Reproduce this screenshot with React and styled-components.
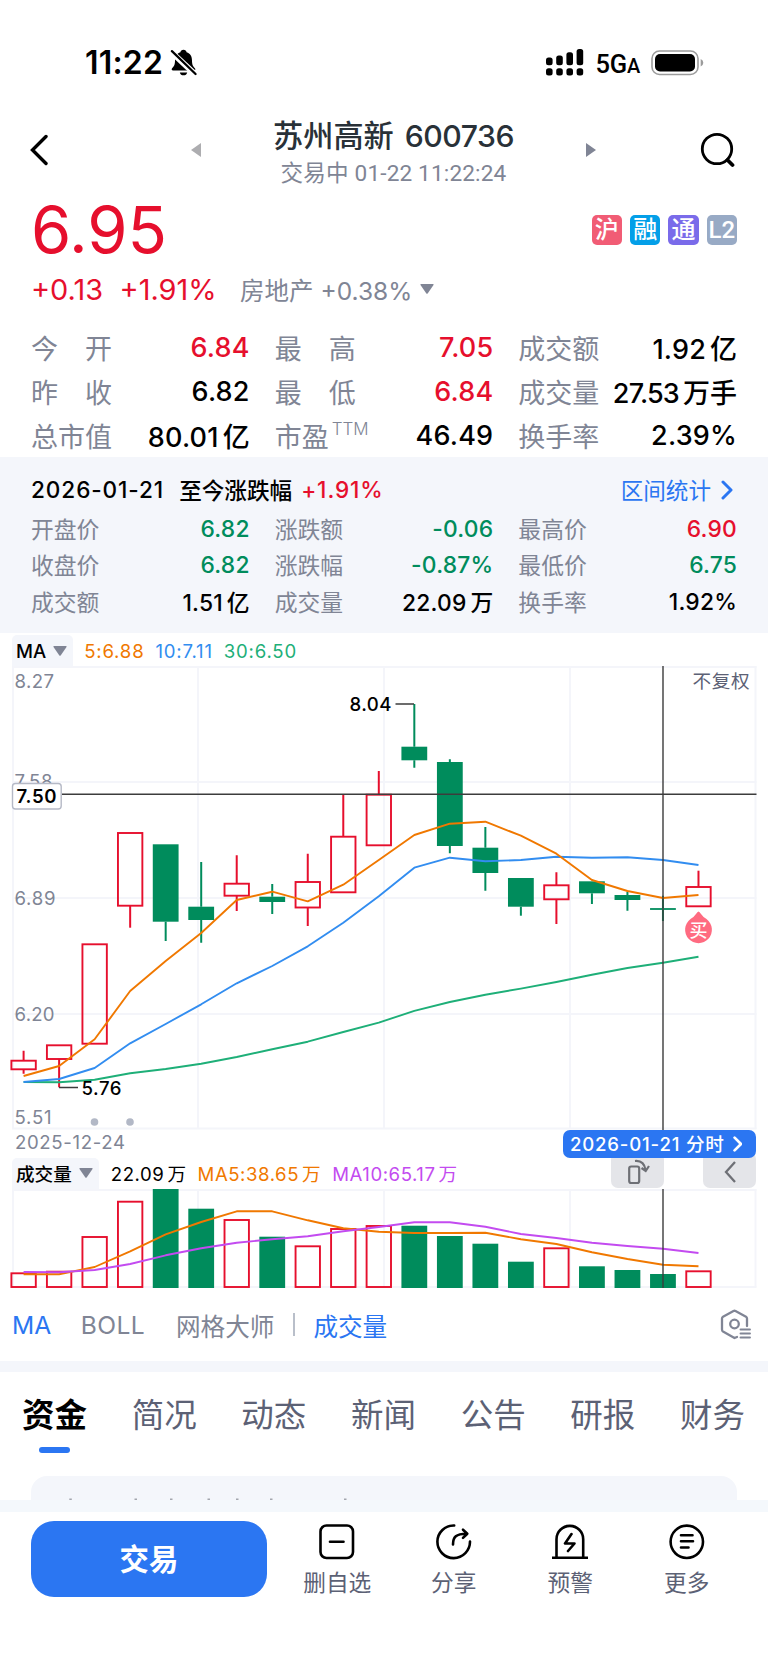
import React, { Component } from 'react';
import styled, { css, createGlobalStyle } from 'styled-components';

const RED = '#e60f2d';
const GREEN = '#008c5c';
const BLUE = '#2b76f2';
const ORANGE = '#f07800';
const GRAY = '#808595';
const SLATE = '#5c6175';
const GRID = '#f4f5fa';
const PANEL = '#f4f6fb';

const FONT = '"Inter", "Noto Sans CJK SC", sans-serif';

// step between candles and the center of the first one
const STEP = 35.52;
const FIRST = 23.6;
const cx = (i) => FIRST + STEP * i;

// [up?, high, body top, body bottom, low], y measured on the chart
const CANDLES = [
	[1, 1050.7, 1060.7, 1069.3, 1073.7],
	[1, 1045.3, 1045.3, 1059, 1087.3],
	[1, 944.3, 944.3, 1043.7, 1043.7],
	[1, 833, 833, 905.7, 927.7],
	[0, 844.3, 844.3, 921.7, 941],
	[0, 862, 906.7, 920, 942.7],
	[1, 855.3, 883.7, 895.7, 911],
	[0, 884, 896.7, 902, 914],
	[1, 853.7, 882, 907.5, 926],
	[1, 794.3, 836.7, 892.3, 892.3],
	[1, 771, 794.7, 845.3, 845.3],
	[0, 704, 746.7, 760.3, 767.7],
	[0, 759.3, 762, 846, 853.3],
	[0, 827, 847.7, 873, 890.7],
	[0, 878, 878, 906.7, 915.7],
	[1, 872.3, 885.3, 899.3, 924],
	[0, 881.3, 881.3, 893.3, 904],
	[0, 891.7, 895, 900, 910.7],
	[0, 895.7, 908.1, 909.9, 921],
	[1, 870.7, 887, 906.3, 906.3],
];
const MA5 = [1076, 1066, 1039.3, 991, 961, 933, 900, 891.7, 901.3, 884.7, 860, 835, 823.7, 821.7, 835.7, 853.7, 880, 891, 898, 895];
const MA10 = [1082, 1079, 1068, 1043.3, 1024, 1004.3, 983.3, 966, 946.3, 922.7, 896.3, 867.7, 857.7, 861.3, 860, 856.7, 857.7, 857.3, 860, 865];
const MA30 = [1082, 1082.3, 1079.7, 1073.3, 1069, 1063.7, 1057, 1049.3, 1041.7, 1032, 1022.7, 1010.8, 1002, 994.7, 988.6, 982, 974.7, 968, 962.7, 956.7];

const VOLUMES = [1273.3, 1271.7, 1237, 1201.7, 1189, 1208.7, 1220, 1236.7, 1246.3, 1229, 1226, 1225.7, 1236, 1243.7, 1261.7, 1248.3, 1266.3, 1270, 1274, 1271.3];
const VMA5 = [1274.3, 1274.3, 1267, 1251.3, 1234.3, 1222, 1211.3, 1211.3, 1220.3, 1228.3, 1231.7, 1233, 1233, 1232.7, 1239.3, 1244, 1252.3, 1259, 1264.7, 1266.3];
const VMA10 = [1272, 1272.3, 1270, 1264, 1255.3, 1248.3, 1242.7, 1239.3, 1236.3, 1231.3, 1227, 1222.3, 1222.3, 1226.7, 1234, 1238, 1242.7, 1246, 1248.7, 1253];

const QUOTES = [
	{ label: '今　开', value: '6.84', color: RED },
	{ label: '最　高', value: '7.05', color: RED },
	{ label: '成交额', value: '1.92', unit: '亿' },
	{ label: '昨　收', value: '6.82' },
	{ label: '最　低', value: '6.84', color: RED },
	{ label: '成交量', value: '27.53', unit: '万手', tight: true },
	{ label: '总市值', value: '80.01', unit: '亿' },
	{ label: '市盈', sup: 'TTM', value: '46.49' },
	{ label: '换手率', value: '2.39%' },
];

const DAY = [
	{ label: '开盘价', value: '6.82', color: GREEN },
	{ label: '涨跌额', value: '-0.06', color: GREEN },
	{ label: '最高价', value: '6.90', color: RED },
	{ label: '收盘价', value: '6.82', color: GREEN },
	{ label: '涨跌幅', value: '-0.87%', color: GREEN },
	{ label: '最低价', value: '6.75', color: GREEN },
	{ label: '成交额', value: '1.51', unit: '亿' },
	{ label: '成交量', value: '22.09', unit: '万' },
	{ label: '换手率', value: '1.92%' },
];

const BADGES = [
	{ text: '沪', color: '#f15c75' },
	{ text: '融', color: '#049fe8' },
	{ text: '通', color: '#7a6bea' },
	{ text: 'L2', color: '#98aac5' },
];

const TABS = ['资金', '简况', '动态', '新闻', '公告', '研报', '财务'];

const GlobalStyle = createGlobalStyle`
	html, body {
		margin: 0;
		padding: 0;
		background: #fff;
	}
	body {
		font-family: ${FONT};
		color: #000;
	}
	* {
		box-sizing: border-box;
	}
	svg {
		display: block;
		flex: none;
	}
`;

const Page = styled.div`
	width: 768px;
	height: 1670px;
	overflow: hidden;
	display: flex;
	flex-direction: column;
	background: #fff;
	white-space: nowrap;
`;

const row = css`
	display: flex;
	align-items: center;
`;

const StatusBar = styled.div`
	${row}
	justify-content: space-between;
	height: 100px;
	padding: 25px 64px 0 85px;
	flex: none;
`;

const Clock = styled.div`
	${row}
	gap: 7px;
	font-size: 32px;
	font-weight: 600;
	letter-spacing: 0.2px;
`;

const Signals = styled.div`
	${row}
`;

const Network = styled.span`
	margin: 3px 11px 0 11px;
	font-family: Roboto, sans-serif;
	font-size: 25.5px;
	font-weight: 500;
	letter-spacing: -0.2px;
	small {
		font-size: 20px;
	}
`;

const Header = styled.div`
	${row}
	height: 98px;
	padding: 2px 33px 0 30px;
	flex: none;
`;

const BackIcon = styled.svg`
	margin-right: 143px;
`;

const SearchIcon = styled.svg`
	margin-left: auto;
`;

const TitleBox = styled.div`
	width: 385px;
	padding-top: 7px;
	text-align: center;
`;

const Title = styled.div`
	font-size: 30.2px;
	line-height: 38px;
	font-weight: 500;
	color: #293138;
	span {
		margin-left: 3px;
		letter-spacing: -0.5px;
	}
`;

const SubTitle = styled.div`
	padding-top: 2px;
	font-family: Roboto, "Noto Sans CJK SC", sans-serif;
	font-size: 22.6px;
	line-height: 33px;
	color: ${GRAY};
	letter-spacing: 0.15px;
`;

const PriceRow = styled.div`
	${row}
	justify-content: space-between;
	height: 64px;
	padding: 0 31px;
	flex: none;
`;

const Price = styled.div`
	font-size: 65px;
	line-height: 64px;
	color: ${RED};
	letter-spacing: -0.1px;
`;

const Badges = styled.div`
	display: flex;
	gap: 7.8px;
`;

const Badge = styled.span`
	width: 30.5px;
	height: 30.5px;
	border-radius: 5px;
	background: ${(p) => p.$color};
	color: #fff;
	font-family: Roboto, "Noto Sans CJK SC", sans-serif;
	font-size: 24px;
	font-weight: 500;
	line-height: 30px;
	text-align: center;
`;

const ChangeRow = styled.div`
	${row}
	height: 56px;
	padding: 0 31px 2px;
	font-size: 28.9px;
	color: ${RED};
	flex: none;
	b {
		font-weight: 400;
		margin-right: 16.5px;
	}
`;

const Industry = styled.span`
	${row}
	gap: 8px;
	margin-left: 7px;
	font-size: 24.5px;
	color: ${GRAY};
`;

const Grid = styled.div`
	display: grid;
	grid-template-columns: repeat(3, 1fr);
	column-gap: 25px;
	grid-auto-rows: ${(p) => p.$row}px;
	font-size: ${(p) => p.$size}px;
`;

const Quotes = styled.section`
	height: 139px;
	padding: 8px 31px 0;
	flex: none;
`;

const Cell = styled.div`
	${row}
	justify-content: space-between;
`;

const Label = styled.span`
	color: ${GRAY};
	sup {
		margin-left: 3px;
		font-size: 17px;
		font-weight: 300;
		line-height: 0;
		vertical-align: 12px;
	}
`;

const Value = styled.span`
	font-weight: 500;
	color: ${(p) => p.$color || '#000'};
	letter-spacing: ${(p) => (p.$tight ? '-0.8px' : '0.2px')};
	i {
		font-style: normal;
		margin-left: 4px;
		letter-spacing: 0;
	}
`;

const DayPanel = styled.section`
	height: 176px;
	padding: 12px 31px 0;
	background: ${PANEL};
	flex: none;
`;

const DayHead = styled.div`
	${row}
	height: 41px;
	font-size: 22.6px;
	font-weight: 500;
	letter-spacing: 0.9px;
	b {
		margin: 0 9px 0 15px;
		font-weight: 500;
		letter-spacing: 0;
	}
	em {
		font-style: normal;
		color: ${RED};
	}
`;

const RangeLink = styled.span`
	${row}
	margin-left: auto;
	padding-right: 4px;
	gap: 10px;
	font-weight: 400;
	letter-spacing: 0;
	color: ${BLUE};
`;

const Legend = styled.div`
	${row}
	position: relative;
	height: ${(p) => p.$height}px;
	padding: ${(p) => p.$height - 31}px 12px 0;
	font-size: 18.6px;
	letter-spacing: ${(p) => p.$spacing}px;
	flex: none;
`;

const Chip = styled.span`
	${row}
	gap: 7px;
	height: 31px;
	padding: 0 6px ${(p) => p.$lift || 0}px 4px;
	border-radius: 5px 5px 0 0;
	background: ${PANEL};
	font-weight: 500;
	letter-spacing: 0;
`;

const LegendItem = styled.span`
	margin-left: ${(p) => p.$gap || 11}px;
	padding-bottom: ${(p) => p.$lift || 0}px;
	color: ${(p) => p.$color || '#000'};
	i {
		font-style: normal;
		margin-left: 3px;
	}
`;

const DateRow = styled.div`
	${row}
	position: relative;
	z-index: 1;
	justify-content: space-between;
	height: 28px;
	padding: 0 12px 0 15px;
	font-size: 18.6px;
	letter-spacing: 0.65px;
	color: ${GRAY};
	flex: none;
	> span {
		margin-top: -5px;
	}
`;

const DateTip = styled.div`
	${row}
	gap: 8px;
	width: 193px;
	height: 28px;
	padding: 0 0 4px 7px;
	border-radius: 7px;
	background: ${BLUE};
	color: #fff;
	font-size: 18.6px;
	font-weight: 500;
	letter-spacing: 0.8px;
	svg {
		margin-top: 3px;
	}
`;

const ChartButtons = styled.div`
	display: flex;
	gap: 39px;
	margin-left: auto;
	align-self: flex-start;
`;

const ChartButton = styled.span`
	${row}
	justify-content: center;
	width: 53px;
	height: 36px;
	margin-top: -6px;
	padding-top: 3px;
	border-radius: 7px;
	background: #e4e5e9;
`;

const Indicators = styled.div`
	${row}
	height: 73px;
	padding: 0 17px 0 12px;
	font-size: 24.6px;
	color: ${GRAY};
	flex: none;
	svg {
		margin-left: auto;
	}
`;

const Indicator = styled.span`
	margin-right: ${(p) => p.$gap || 31}px;
	color: ${(p) => (p.$active ? BLUE : GRAY)};
	letter-spacing: ${(p) => p.$spacing || 0}px;
`;

const Separator = styled.span`
	width: 2px;
	height: 23px;
	margin-right: 18px;
	background: #b9bfca;
`;

const Band = styled.div`
	height: ${(p) => p.$height}px;
	background: ${(p) => p.$color || PANEL};
	flex: none;
`;

const Tabs = styled.nav`
	display: flex;
	justify-content: space-between;
	height: 104px;
	padding: 19px 23px 0 22px;
	font-size: 32.5px;
	color: ${SLATE};
	flex: none;
`;

const Tab = styled.span`
	display: flex;
	flex-direction: column;
	align-items: center;
	gap: 7px;
	line-height: 49px;
	${(p) => p.$active && css`
		font-weight: 600;
		color: #000;
		&:after {
			content: '';
			width: 31px;
			height: 6px;
			border-radius: 3px;
			background: ${BLUE};
		}
	`}
`;

const Card = styled.div`
	height: 24px;
	margin: 0 31px;
	border-radius: 16px 16px 0 0;
	background: ${PANEL};
	flex: none;
`;

const BottomBar = styled.div`
	display: flex;
	padding: 9px 23px 0 31px;
	flex: none;
`;

const TradeButton = styled.div`
	width: 236px;
	height: 76px;
	margin-right: 12px;
	border-radius: 23px;
	background: ${BLUE};
	color: #fff;
	font-size: 29.4px;
	font-weight: 600;
	line-height: 77px;
	text-align: center;
`;

const Action = styled.div`
	display: flex;
	flex-direction: column;
	align-items: center;
	gap: 6px;
	width: 116.5px;
	padding-top: 3px;
	font-size: 22.7px;
	line-height: 34px;
	color: ${SLATE};
`;

const Caret = ({ w = 14, h = 10, color = GRAY }) => (
	<svg width={w} height={h} viewBox="0 0 14 10">
		<path d="M1 0h12q1 0 .5 1L7.8 9.2q-.8 1-1.6 0L.5 1Q0 0 1 0z" fill={color} />
	</svg>
);

const Chevron = ({ size, width, color }) => (
	<svg width={size * 0.6} height={size} viewBox="0 0 12 20" fill="none" stroke={color} strokeWidth={width} strokeLinecap="round" strokeLinejoin="round">
		<path d="M2 2l8 8-8 8" />
	</svg>
);

const BellOff = () => (
	<svg width="27" height="27" viewBox="0 0 28 28">
		<path d="M14 .8c1.8 0 3 1 3.2 2.5 3.9 1.2 5.6 4.3 5.6 8.3 0 4.600 1 6.3 3 8.400.9 1 .6 2.4-.9 2.4H3.2c-1.5 0-1.9-1.4-1-2.4 2-2.1 3-3.8 3-8.4 0-4 1.7-7.1 5.6-8.3C11 1.8 12.2.8 14 .8z" />
		<path d="M10.200 24.3h7.6c-.4 2-1.9 3-3.8 3s-3.4-1-3.8-3z" />
		<path d="M1.5 3.2l24.5 23" stroke="#fff" strokeWidth="6" />
		<path d="M2 2.2l24.5 23.8" stroke="#000" strokeWidth="2.3" strokeLinecap="round" />
	</svg>
);

const SignalIcon = () => (
	<svg width="38" height="27" viewBox="0 0 38 27">
		{[8.5, 6.5, 3.2, 0].map((y, i) => (
			<g key={i}>
				<rect x={i * 10.2} y={y} width="6.6" height={16.3 - y} rx="2.5" />
				<rect x={i * 10.2} y="19.3" width="6.6" height="7.2" rx="2.5" />
			</g>
		))}
	</svg>
);

const BatteryIcon = () => (
	<svg width="53" height="26" viewBox="0 0 53 26">
		<rect x="1" y="1" width="46" height="23.5" rx="7.5" fill="none" stroke="#9b9b9b" strokeWidth="1.6" />
		<rect x="4" y="4" width="40" height="17.5" rx="5" />
		<path d="M49.7 9v7.5q2.6-1 2.6-3.7t-2.6-3.8z" fill="#9b9b9b" />
	</svg>
);

const RotateIcon = () => (
	<svg width="24" height="26" viewBox="0 0 24 26" fill="none" stroke="#6e7076" strokeWidth="2.2">
		<rect x="3.2" y="7.5" width="10" height="16.5" rx="2" />
		<path d="M9 2c5.5-.5 9.5 2.5 10.5 9M15.5 9l4.2 3 3.3-5" />
	</svg>
);

const SettingsIcon = () => (
	<svg width="31" height="31" viewBox="0 0 31 31" fill="none" stroke={GRAY} strokeWidth="2.3" strokeLinecap="round" strokeLinejoin="round">
		<path d="M17 28l-2.5 1L3 22.5q-1-.6-1-2V9.5q0-1.2 1-1.8L13.5 2q1-.5 2 0L26 7.7q1 .6 1 1.8V17" />
		<circle cx="14.5" cy="15" r="4.3" />
		<path d="M20.5 20.5h9.5M20.5 24.5h9.5M20.5 28.5h9.5" strokeWidth="1.9" />
	</svg>
);

const ACTIONS = [
	{
		label: '删自选',
		icon: <g><rect x="1.5" y="1.5" width="32.5" height="32.5" rx="6" /><path d="M11 17.7h13.5" /></g>,
	},
	{
		label: '分享',
		icon: <g><path d="M18.2 1.5A16.3 16.3 0 1 0 34 17.5" /><path d="M17 20.5C17 13 20 9.7 30.5 9.7M27 5.7l4.3 4-4.3 4.2" /></g>,
	},
	{
		label: '预警',
		icon: <g><path d="M4.5 33V15.2a13.3 13.3 0 0 1 26.7 0V33M0 33.7h35.7M19.5 10l-6.5 9.5h9.5l-6.5 7.5" /></g>,
	},
	{
		label: '更多',
		icon: <g><circle cx="17.8" cy="17.8" r="16.2" /><path d="M12 11.3h11.5M12 17.3h12M12 23.5h7.5" /></g>,
	},
];

class App extends Component {

	line(values, color, top) {
		let points = values.map((y, i) => `${cx(i)},${y - top}`).join(' ');
		return <polyline points={points} fill="none" stroke={color} strokeWidth="1.9" strokeLinejoin="round" />;
	}

	body(i, up, top, bottom) {
		return up
			? <rect x={cx(i) - 12.2} y={top} width="24.4" height={bottom - top} fill="none" stroke={RED} strokeWidth="1.9" />
			: <rect x={cx(i) - 12.9} y={top} width="25.8" height={bottom - top} fill={GREEN} />;
	}

	getCells(list) {
		return list.map((c, i) => (
			<Cell key={i}>
				<Label>{c.label}{c.sup && <sup>{c.sup}</sup>}</Label>
				<Value $color={c.color} $tight={c.tight}>{c.value}{c.unit && <i>{c.unit}</i>}</Value>
			</Cell>
		));
	}

	getGrid(height, rows) {
		return <g stroke={GRID} strokeWidth="2">
			{ [13, 198, 384, 570, 755.5].map((x) => <path key={x} d={`M${x} 0V${height}`} />) }
			{ rows.map((y) => <path key={y} d={`M12 ${y}H756.5`} />) }
		</g>;
	}

	renderPriceChart() {
		let top = 666;
		return (
			<svg width="768" height="464" viewBox="0 0 768 464" fontFamily={FONT} fontSize="18.6">
				{ this.getGrid(463, [1, 116, 232, 348, 462.5]) }
				<g fill={GRAY}>
					<text x="14.5" y="21.5" textLength="39.5">8.27</text>
					<text x="14.5" y="122" textLength="38">7.58</text>
					<text x="14.5" y="238.5" textLength="41">6.89</text>
					<text x="14.5" y="354.5" textLength="40">6.20</text>
					<text x="14.5" y="457.5" textLength="37">5.51</text>
				</g>
				<text x="692.5" y="22" fill={SLATE} textLength="57">不复权</text>
				{ CANDLES.map(([up, high, open, close, low], i) => (
					<g key={i}>
						<path
							d={`M${cx(i)} ${high - top}V${open - top}M${cx(i)} ${close - top}V${low - top}`}
							stroke={up ? RED : GREEN}
							strokeWidth="2"
						/>
						{ this.body(i, up, open - top, close - top) }
					</g>
				)) }
				{ this.line(MA30, '#1eaf78', top) }
				{ this.line(MA10, '#328df0', top) }
				{ this.line(MA5, ORANGE, top) }
				<g stroke="#3c3c3c" strokeWidth="1.4">
					<path d="M395.5 38H414M59 421.5H78" />
					<path d="M62 128.2H756.5M663 0V464" />
				</g>
				<g fontWeight="500">
					<text x="349.5" y="45" textLength="42">8.04</text>
					<text x="81.5" y="428.7" textLength="40">5.76</text>
				</g>
				<rect x="12.5" y="117.5" width="48.7" height="25.5" rx="3" fill="#fff" stroke="#b5b9c6" strokeWidth="1.4" />
				<text x="16.5" y="137" fontWeight="600" textLength="40">7.50</text>
				<circle cx="94.5" cy="456" r="3.8" fill="#b2b8c6" />
				<circle cx="130" cy="456" r="3.8" fill="#b2b8c6" />
				<path d="M698.5 245.5q1 0 2.5 2.5 2 3 5.5 5a13.4 13.4 0 1 1-16 0q3.5-2 5.5-5 1.5-2.5 2.5-2.5z" fill="#ff6b81" />
				<text x="698.5" y="270.500" fill="#fff" fontSize="18" fontWeight="500" textAnchor="middle">买</text>
			</svg>
		);
	}

	renderVolumeChart() {
		let top = 1189;
		return (
			<svg width="768" height="99" viewBox="0 0 768 99">
				{ this.getGrid(98, [1, 98]) }
				{ VOLUMES.map((y, i) => (
					<g key={i}>{ this.body(i, CANDLES[i][0], y - top, CANDLES[i][0] ? 98 : 99) }</g>
				)) }
				{ this.line(VMA5, ORANGE, top) }
				{ this.line(VMA10, '#c34bf0', top) }
				<path d="M663 0V99" stroke="#3c3c3c" strokeWidth="1.4" />
			</svg>
		);
	}

	render() {
		return (
			<Page>
				<GlobalStyle />
				<StatusBar>
					<Clock>11:22<BellOff /></Clock>
					<Signals>
						<SignalIcon />
						<Network>5G<small>A</small></Network>
						<BatteryIcon />
					</Signals>
				</StatusBar>
				<Header>
					<BackIcon width="18" height="32" viewBox="0 0 18 32" fill="none" stroke="#000" strokeWidth="3.4" strokeLinecap="round">
						<path d="M16 2.5L2.5 16 16 29.5" />
					</BackIcon>
					<svg width="10" height="14" viewBox="0 0 10 14">
						<path d="M10 0v14L0 7z" fill="#adadb0" />
					</svg>
					<TitleBox>
						<Title>苏州高新 <span>600736</span></Title>
						<SubTitle>交易中 01-22 11:22:24</SubTitle>
					</TitleBox>
					<svg width="10" height="14" viewBox="0 0 10 14">
						<path d="M0 0v14l10-7z" fill={GRAY} />
					</svg>
					<SearchIcon width="36" height="36" viewBox="0 0 36 36" fill="none" stroke="#000" strokeWidth="2.8" strokeLinecap="round">
						<circle cx="18" cy="17" r="14.7" />
						<path d="M28.5 28l5 5" strokeWidth="3.8" />
					</SearchIcon>
				</Header>
				<PriceRow>
					<Price>6.95</Price>
					<Badges>
						{ BADGES.map((b) => <Badge key={b.text} $color={b.color}>{b.text}</Badge>) }
					</Badges>
				</PriceRow>
				<ChangeRow>
					<b>+0.13</b>
					<b>+1.91%</b>
					<Industry>房地产 +0.38% <Caret /></Industry>
				</ChangeRow>
				<Quotes>
					<Grid $row={43.7} $size={27}>{ this.getCells(QUOTES) }</Grid>
				</Quotes>
				<DayPanel>
					<DayHead>
						2026-01-21<b>至今涨跌幅</b><em>+1.91%</em>
						<RangeLink>区间统计 <Chevron size={20} width={3} color={BLUE} /></RangeLink>
					</DayHead>
					<Grid $row={36.5} $size={22.8}>{ this.getCells(DAY) }</Grid>
				</DayPanel>
				<Legend $height={33} $spacing={0.8}>
					<Chip>MA <Caret /></Chip>
					<LegendItem $color={ORANGE}>5:6.88</LegendItem>
					<LegendItem $color="#328df0">10:7.11</LegendItem>
					<LegendItem $color="#1eaf78">30:6.50</LegendItem>
				</Legend>
				{ this.renderPriceChart() }
				<DateRow>
					<span>2025-12-24</span>
					<DateTip>2026-01-21 分时 <Chevron size={16} width={3.4} color="#fff" /></DateTip>
				</DateRow>
				<Legend $height={31} $spacing={0.55}>
					<Chip $lift={2}>成交量 <Caret /></Chip>
					<LegendItem $lift={2} $gap={12}>22.09<i>万</i></LegendItem>
					<LegendItem $lift={2} $color={ORANGE}>MA5:38.65<i>万</i></LegendItem>
					<LegendItem $lift={2} $color="#c34bf0">MA10:65.17<i>万</i></LegendItem>
					<ChartButtons>
						<ChartButton><RotateIcon /></ChartButton>
						<ChartButton>
							<svg width="12" height="22" viewBox="0 0 12 22" fill="none" stroke="#6e7076" strokeWidth="2.3">
								<path d="M11 1L2 11l9 10" />
							</svg>
						</ChartButton>
					</ChartButtons>
				</Legend>
				{ this.renderVolumeChart() }
				<Indicators>
					<Indicator $active $gap={29.5}>MA</Indicator>
					<Indicator $spacing={0.4}>BOLL</Indicator>
					<Indicator $gap={19}>网格大师</Indicator>
					<Separator />
					<Indicator $active>成交量</Indicator>
					<SettingsIcon />
				</Indicators>
				<Band $height={11} />
				<Tabs>
					{ TABS.map((t, i) => <Tab key={t} $active={i === 0}>{t}</Tab>) }
				</Tabs>
				<Card>
					<svg width="706" height="24" viewBox="0 0 706 24" fill="#a3a6ae">
						{ [38.3, 103.5, 139, 176.5, 205, 239, 313].map((x) => <rect key={x} x={x} y="22.5" width="2.5" height="1.5" />) }
					</svg>
				</Card>
				<Band $height={12} $color="#f4f8fc" />
				<BottomBar>
					<TradeButton>交易</TradeButton>
					{ ACTIONS.map((a) => (
						<Action key={a.label}>
							<svg width="36" height="36" viewBox="0 0 36 36" fill="none" stroke="#000" strokeWidth="2.6" strokeLinecap="round" strokeLinejoin="round">{a.icon}</svg>
							{a.label}
						</Action>
					)) }
				</BottomBar>
			</Page>
		);
	}

}

export default App;
